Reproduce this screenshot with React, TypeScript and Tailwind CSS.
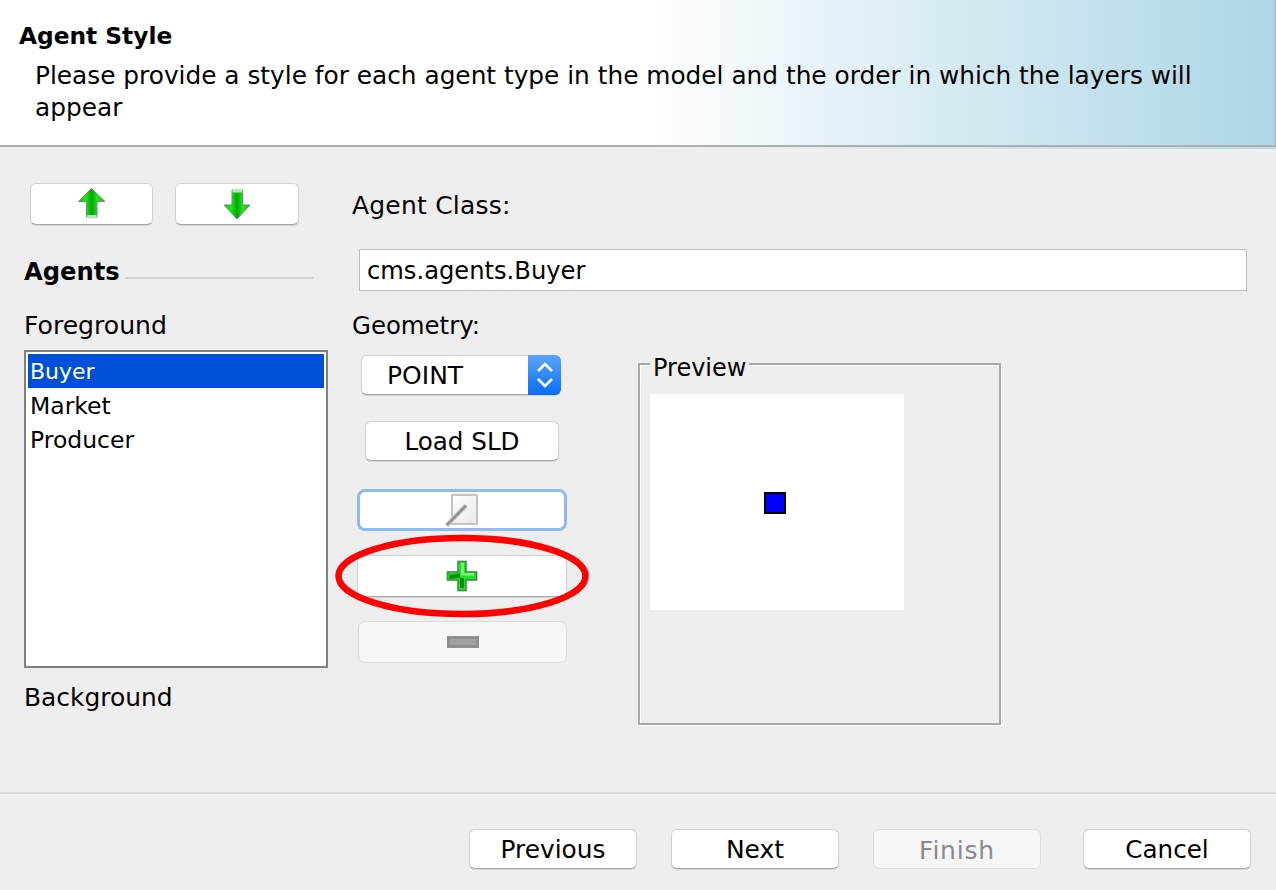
import type { ReactNode } from "react";

const font = "font-['DejaVu_Sans',sans-serif]";

const Btn = ({ className, children }: { className: string; children: ReactNode }) => (
  <button className={`flex items-center justify-center rounded-[6px] bg-white border border-[#d4d4d4] border-b-[#a8a8a8] shadow-[0_1px_1px_rgba(0,0,0,0.12)] text-black ${className}`}>
    {children}
  </button>
);

const GreenGrad = () => (
  <defs>
    <linearGradient id="g" x1="0" x2="1" y1="0" y2="0">
      <stop offset="0" stopColor="#00d000" />
      <stop offset="0.28" stopColor="#10f010" />
      <stop offset="0.5" stopColor="#00a400" />
      <stop offset="0.72" stopColor="#20e820" />
      <stop offset="1" stopColor="#00c000" />
    </linearGradient>
  </defs>
);

const UpArrow = () => (
  <svg className="blur-[0.3px]" width="28" height="32" viewBox="0 0 28 32">
    <GreenGrad />
    <path d="M13.5 0.5 L27 13.5 H19 V29 H8.5 V13.5 H0.5 Z" fill="url(#g)" stroke="#6f8f6f" strokeWidth="1" />
    <rect x="9" y="27" width="9.5" height="3.5" fill="#b8e8b8" />
  </svg>
);

const DownArrow = () => (
  <svg className="blur-[0.3px]" width="28" height="32" viewBox="0 0 28 32">
    <GreenGrad />
    <path d="M14 31 L27 17 H19.5 V2 H9 V17 H1 Z" fill="url(#g)" stroke="#6f8f6f" strokeWidth="1" />
    <rect x="9.5" y="1" width="9.5" height="3.5" fill="#b8e8b8" />
  </svg>
);

const Pencil = () => (
  <svg className="blur-[0.3px]" width="34" height="34" viewBox="0 0 34 34">
    <defs>
      <linearGradient id="p" x1="0" x2="1" y1="0" y2="1">
        <stop offset="0" stopColor="#ffffff" />
        <stop offset="1" stopColor="#e8e8e8" />
      </linearGradient>
    </defs>
    <rect x="7" y="2" width="25" height="29" fill="url(#p)" stroke="#c2c2c2" strokeWidth="2" />
    <path d="M1.5 32.5 L21 12.5" stroke="#d0d0d0" strokeWidth="5" />
    <path d="M2 32 L21 12.5" stroke="#8c8c8c" strokeWidth="2.5" />
  </svg>
);

const PlusIcon = () => (
  <svg className="blur-[0.3px]" width="34" height="34" viewBox="0 0 34 34">
    <path d="M11.5 1 H22.5 V11.5 H33 V22.5 H22.5 V33 H11.5 V22.5 H1 V11.5 H11.5 Z" fill="#eef2ee" />
    <path d="M13 2.5 H21 V13 H31.5 V21 H21 V31.5 H13 V21 H2.5 V13 H13 Z" fill="#22e022" stroke="#3f8a4f" strokeWidth="1.5" />
    <path d="M4 16 L14 14.5 H15 V29 H19 V19 H11 L5 20 Z" fill="#009000" />
    <path d="M16 4 H19 V14 H29 V16.5 H16 Z" fill="#78ff78" />
  </svg>
);

const MinusIcon = () => (
  <svg width="32" height="12" viewBox="0 0 32 12">
    <rect width="32" height="12" fill="#8f8f8f" />
    <rect x="3" y="3" width="26" height="6" fill="#a0a0a0" />
  </svg>
);

const Chevrons = () => (
  <svg width="18" height="28" viewBox="0 0 18 28" fill="none" stroke="white" strokeWidth="2.6">
    <path d="M2 10 L9 3 L16 10" />
    <path d="M2 18 L9 25 L16 18" />
  </svg>
);

export default function App() {
  return (
    <div className={`w-[1276px] h-[890px] bg-[#eeeeee] overflow-hidden text-black ${font}`}>
      <header className="h-[149px] bg-[linear-gradient(90deg,#f2f2f2_50%,#b5dbea_100%)]">
        <div className="h-[147px] border-b-[2px] border-r border-[#aeaeae] bg-[linear-gradient(90deg,#ffffff_0%,#ffffff_50%,#acd6e6_100%)] pl-[19px] pt-[19px]">
          <div className="text-[23.3px] font-bold leading-[34px]">Agent Style</div>
          <p className="mt-[7px] pl-[16px] w-[1200px] text-[24.8px] leading-[32px]">
            Please provide a style for each agent type in the model and the order in which the layers will appear
          </p>
        </div>
      </header>

      <main className="h-[643px] flex">
        <div className="w-[352px] pl-[24px] shrink-0">
          <div className="flex gap-[22px] pl-[6px] pt-[34px]">
            <Btn className="w-[123px] h-[42px]"><UpArrow /></Btn>
            <Btn className="w-[124px] h-[42px]"><DownArrow /></Btn>
          </div>
          <div className="flex mt-[30px] h-[34px] items-center w-[289px]">
            <span className="text-[24.2px] font-bold leading-[34px]">Agents</span>
            <div className="flex-1 h-[2px] bg-[#d2d2d2] ml-[5px] mt-[11px]" />
          </div>
          <div className="text-[25.1px] leading-[34px] mt-[20px]">Foreground</div>
          <div className="w-[304px] h-[318px] mt-[7px] bg-white border-[2px] border-[#808080] p-[2px] text-[23.5px] leading-[36px]">
            <div className="bg-[#0050d5] text-white pl-[2px] h-[34px] text-[22px]">Buyer</div>
            <div className="pl-[2px] h-[34px]">Market</div>
            <div className="pl-[2px] h-[34px]">Producer</div>
          </div>
          <div className="text-[24.9px] leading-[34px] mt-[13px]">Background</div>
        </div>

        <div className="flex-1 min-w-0">
          <div className="text-[25px] tracking-[0.2px] leading-[34px] mt-[40px]">Agent Class:</div>
          <div className="ml-[7px] mt-[26px] w-[888px] h-[42px] bg-white border border-[#bcbcbc] pl-[7px] text-[24.2px] leading-[42px]">cms.agents.Buyer</div>
          <div className="text-[24.4px] leading-[34px] mt-[18px]">Geometry:</div>
          <div className="flex">
            <div className="w-[286px] shrink-0">
              <div className="ml-[9px] mt-[12px] w-[200px] h-[40px] flex rounded-[6px] bg-white border border-[#d4d4d4] border-b-[#a8a8a8] shadow-[0_1px_1px_rgba(0,0,0,0.12)]">
                <span className="flex-1 pl-[25px] text-[25px] leading-[40px]">POINT</span>
                <span className="w-[33px] -my-px -mr-px rounded-r-[6px] flex items-center justify-center bg-[linear-gradient(180deg,#5aa5fa_0%,#0a6cf5_100%)]">
                  <Chevrons />
                </span>
              </div>
              <Btn className="ml-[13px] mt-[26px] w-[194px] h-[40px] pt-[2px] text-[24.6px]">Load SLD</Btn>
              <button className="ml-[5px] mt-[28px] w-[210px] h-[42px] flex items-center justify-center rounded-[8px] bg-white border-[3px] border-[#8fbcf0]">
                <Pencil />
              </button>
              <div className="relative">
                <Btn className="ml-[5px] mt-[24px] w-[210px] h-[42px]"><PlusIcon /></Btn>
                <svg className="absolute left-[-17px] top-[-20px] overflow-visible" width="254" height="82" viewBox="0 0 254 82" fill="none">
                  <ellipse cx="127" cy="41" rx="123.5" ry="38" stroke="#ff0000" strokeWidth="6.5" />
                </svg>
              </div>
              <button className="ml-[6px] mt-[24px] w-[209px] h-[42px] flex items-center justify-center rounded-[7px] bg-[#f6f6f6] border border-[#dcdcdc]">
                <MinusIcon />
              </button>
            </div>
            <div className="relative w-[363px] h-[362px] mt-[20px] border-[2px] border-[#a9a9a9] shadow-[inset_1px_1px_0_#ffffff,1px_1px_0_#ffffff] pl-[10px] pt-[29px]">
              <span className="absolute left-[10px] -top-[11px] bg-[#eeeeee] px-[3px] text-[24px] leading-[28px]">Preview</span>
              <div className="w-[254px] h-[216px] bg-white pt-[98px] pl-[114px]">
                <div className="w-[22px] h-[22px] bg-[#0000ff] border-[2px] border-black" />
              </div>
            </div>
          </div>
        </div>
      </main>

      <footer className="h-[98px] border-t-[2px] border-[#d8d8d8] flex justify-end gap-[34px] pt-[35px] pr-[25px]">
        <Btn className="w-[168px] h-[40px] pt-[2px] text-[24.8px]">Previous</Btn>
        <Btn className="w-[168px] h-[40px] pt-[2px] text-[25px]">Next</Btn>
        <button className="w-[168px] h-[40px] pt-[2px] rounded-[6px] bg-[#f6f6f6] border border-[#dddddd] text-[25px] tracking-[0.8px] text-[#8a8a8a]">Finish</button>
        <Btn className="w-[168px] h-[40px] pt-[2px] ml-[8px] text-[24.6px]">Cancel</Btn>
      </footer>
    </div>
  );
}
